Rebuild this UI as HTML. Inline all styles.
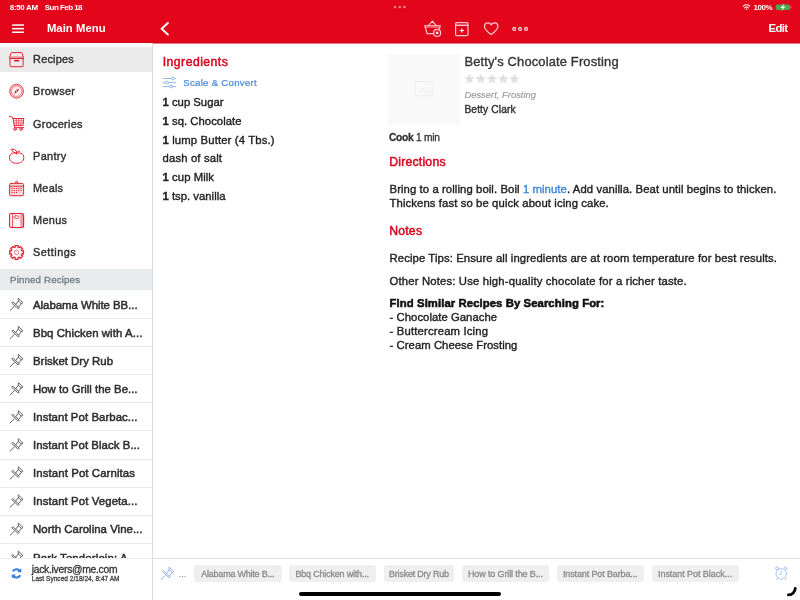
<!DOCTYPE html>
<html lang="en">
<head>
<meta charset="utf-8">
<title>Betty's Chocolate Frosting</title>
<style>
html,body{margin:0;padding:0;}
html{overflow:hidden;background:#fff;}
body{width:800px;height:600px;position:relative;overflow:hidden;background:#fff;font-family:"Liberation Sans",sans-serif;}
.t{position:absolute;white-space:pre;margin:0;padding:0;}
.t b{font-weight:700;}
.abs{position:absolute;}
#hdr{left:0;top:0;width:800px;height:43px;background:#e3061b;border-bottom:1px solid #ef7a84;box-shadow:inset 0 -1px 0 #d0081a;}
#side{left:0;top:43px;width:152px;height:557px;background:#fff;}
#sideline{left:152px;top:43px;width:1px;height:557px;background:#dcdcdc;}
#sel{left:0;top:47px;width:152px;height:25px;background:#ebebeb;}
#pinhdr{left:0;top:269px;width:152px;height:21px;background:#e8ecee;}
.sep{position:absolute;left:0;width:152px;height:1px;background:#e8e8e8;}
#foot{left:0;top:559px;width:152px;height:41px;background:#fff;z-index:5;}
#footline{left:0;top:558px;width:152px;height:1px;background:#ececec;z-index:5;}
#bar{left:153px;top:559px;width:647px;height:41px;background:#fff;z-index:5;}
#barline{left:153px;top:558px;width:647px;height:1px;background:#e2e2e2;z-index:5;}
.chip{position:absolute;top:565px;height:17px;background:#efefef;border-radius:3px;z-index:5;}
#ph{left:388.5px;top:54px;width:71px;height:71px;background:#f7f7f7;}
#home{left:299px;top:591.5px;width:202px;height:4.5px;border-radius:3px;background:#000;z-index:7;}
svg{position:absolute;overflow:visible;}
#app{position:absolute;left:0;top:0;width:800px;height:600px;overflow:hidden;will-change:transform;}
</style>
</head>
<body>
<div id="app">
<div id="hdr" class="abs"></div>
<div id="side" class="abs"></div>
<div id="sideline" class="abs"></div>
<div id="sel" class="abs"></div>
<div id="pinhdr" class="abs"></div>
<div class="sep" style="top:318.0px"></div>
<div class="sep" style="top:346.1px"></div>
<div class="sep" style="top:374.2px"></div>
<div class="sep" style="top:402.3px"></div>
<div class="sep" style="top:430.4px"></div>
<div class="sep" style="top:458.5px"></div>
<div class="sep" style="top:486.6px"></div>
<div class="sep" style="top:514.7px"></div>
<div class="sep" style="top:542.8px"></div>

<div id="foot" class="abs"></div>
<div id="footline" class="abs"></div>
<div id="bar" class="abs"></div>
<div id="barline" class="abs"></div>
<div class="chip" style="left:194.25px;width:87.5px"></div>
<div class="chip" style="left:288.75px;width:87.5px"></div>
<div class="chip" style="left:383.5px;width:70.5px"></div>
<div class="chip" style="left:461.5px;width:87.5px"></div>
<div class="chip" style="left:556.5px;width:87.5px"></div>
<div class="chip" style="left:651.5px;width:87.5px"></div>

<div id="home" class="abs"></div>
<svg width="800" height="600" viewBox="0 0 800 600" style="left:0;top:0;"><g fill="#f8eaec" stroke="#e3061b" stroke-width="1" stroke-linejoin="round" stroke-linecap="round" opacity="0.88"><path d="M9.7 57.2 L10.9 53.3 Q11.2 52.6 12 52.6 L21.1 52.6 Q21.9 52.6 22.2 53.3 L23.4 57.2 Z"/><rect x="9.5" y="57.1" width="14.1" height="1.9" fill="#fff" stroke-width="0.7"/><path d="M10 58.9 L10 65.6 Q10 66.7 11.1 66.7 L22 66.7 Q23.1 66.7 23.1 65.6 L23.1 58.9 Z"/></g><rect x="14.2" y="59.9" width="4.9" height="1.5" fill="#e3061b"/><circle cx="16.56" cy="91.2" r="6.9" fill="rgba(227,6,27,0.22)" stroke="#e3061b" stroke-width="0.9" opacity="0.85"/><circle cx="16.56" cy="91.2" r="5.2" fill="#fff" stroke="#e3061b" stroke-width="0.6" opacity="0.75"/><path d="M19 88.7 L17.4 92.1 L14.1 93.7 L15.7 90.3 Z" fill="#e3061b"/><circle cx="16.56" cy="91.2" r="0.6" fill="#fff"/><g fill="none" stroke="#e3061b" stroke-width="1" stroke-linejoin="round" stroke-linecap="round" opacity="0.88"><path d="M9.5 116.6 L11.2 116.6 Q12.5 116.6 12.9 118 L14.6 127.4 L23.6 127.4"/><path d="M13.1 118.5 L23.8 118.5 L23 125.4 L14.2 125.4" fill="rgba(227,6,27,0.07)"/><path d="M16.3 118.5 L16.5 125.4 M18.6 118.5 L18.6 125.4 M21 118.5 L20.8 125.4 M13.5 120.8 L23.5 120.8 M13.9 123.1 L23.2 123.1" stroke-width="0.6"/><circle cx="15" cy="129" r="1.3" fill="#fff"/><circle cx="21" cy="129" r="1.3" fill="#fff"/></g><g fill="none" stroke="#e3061b" stroke-width="1" stroke-linejoin="round" stroke-linecap="round" opacity="0.88"><path d="M16.6 153.6 C14.4 152.2 9.5 152.6 9.5 157.8 C9.5 161.2 12.6 163.3 16.6 163.3 C20.7 163.3 23.8 161.2 23.8 157.8 C23.8 152.6 18.8 152.2 16.6 153.6 Z"/><path d="M11.7 149.3 C13.6 148.6 16.4 149.8 17 152.7 C14.6 153.3 12.2 152 11.7 149.3 Z"/><path d="M16.8 152.9 C17.5 151.4 18.3 150.9 19.6 151.1"/></g><g fill="rgba(227,6,27,0.16)" stroke="#e3061b" stroke-width="1" stroke-linejoin="round" stroke-linecap="round" opacity="0.88"><rect x="9.6" y="183.4" width="14" height="12.3" rx="1.3"/><path d="M9.6 186.2 L23.6 186.2" /><circle cx="16.56" cy="182.3" r="1" fill="#fff"/></g><g fill="#e3061b" opacity="0.8"><rect x="11.40" y="187.80" width="1.2" height="1.2"/><rect x="13.70" y="187.80" width="1.2" height="1.2"/><rect x="15.96" y="187.80" width="1.2" height="1.2"/><rect x="18.20" y="187.80" width="1.2" height="1.2"/><rect x="20.50" y="187.80" width="1.2" height="1.2"/><rect x="11.40" y="189.90" width="1.2" height="1.2"/><rect x="13.70" y="189.90" width="1.2" height="1.2"/><rect x="15.96" y="189.90" width="1.2" height="1.2"/><rect x="18.20" y="189.90" width="1.2" height="1.2"/><rect x="20.50" y="189.90" width="1.2" height="1.2"/><rect x="11.40" y="192.00" width="1.2" height="1.2"/><rect x="13.70" y="192.00" width="1.2" height="1.2"/><rect x="15.96" y="192.00" width="1.2" height="1.2"/></g><g fill="rgba(227,6,27,0.16)" stroke="#e3061b" stroke-width="1" stroke-linejoin="round" stroke-linecap="round" opacity="0.88"><rect x="9.6" y="213.5" width="14" height="14" rx="1.4" stroke-width="1.15"/></g><rect x="10.6" y="214.3" width="1.5" height="12.4" fill="#fff" opacity="0.8"/><rect x="13.1" y="214.3" width="7" height="12.4" fill="#fff" opacity="0.85"/><g fill="none" stroke="#e3061b" stroke-width="1" stroke-linejoin="round" stroke-linecap="round" opacity="0.88"><path d="M12.6 213.5 L12.6 227.5" stroke-width="0.8"/><rect x="14.3" y="215.8" width="4.6" height="2.7" rx="1.1" stroke-width="0.8"/></g><rect x="20.3" y="214" width="3" height="13" fill="#e3061b" opacity="0.3"/><path d="M15.28 247.05 L14.90 245.50 L18.22 245.50 L17.84 247.05 L19.43 247.71 L20.27 246.35 L22.61 248.69 L21.25 249.53 L21.91 251.12 L23.46 250.74 L23.46 254.06 L21.91 253.68 L21.25 255.27 L22.61 256.11 L20.27 258.45 L19.43 257.09 L17.84 257.75 L18.22 259.30 L14.90 259.30 L15.28 257.75 L13.69 257.09 L12.85 258.45 L10.51 256.11 L11.87 255.27 L11.21 253.68 L9.66 254.06 L9.66 250.74 L11.21 251.12 L11.87 249.53 L10.51 248.69 L12.85 246.35 L13.69 247.71 Z" fill="none" stroke="#e3061b" stroke-width="1.25" stroke-linejoin="round" stroke-linecap="round" opacity="0.88"/><circle cx="16.56" cy="252.4" r="2.3" fill="none" stroke="#e3061b" stroke-width="0.8" opacity="0.6"/><g transform="translate(0.00,0.00)" fill="none" stroke="#5c5c5c" stroke-width="0.95" stroke-linejoin="round" stroke-linecap="round" opacity="1"><path d="M10.1 310.5 L14.3 306.5"/><path d="M12.0 303.2 L18.3 308.8 L19.3 307.7 L13.0 302.1 Z"/><path d="M15.6 304.4 L18.3 301.0 L21.3 303.6 L18.6 307.0"/><path d="M18.3 301.0 L18.3 298.2 L23.0 302.7 L21.3 303.6"/></g><g transform="translate(0.00,28.10)" fill="none" stroke="#5c5c5c" stroke-width="0.95" stroke-linejoin="round" stroke-linecap="round" opacity="1"><path d="M10.1 310.5 L14.3 306.5"/><path d="M12.0 303.2 L18.3 308.8 L19.3 307.7 L13.0 302.1 Z"/><path d="M15.6 304.4 L18.3 301.0 L21.3 303.6 L18.6 307.0"/><path d="M18.3 301.0 L18.3 298.2 L23.0 302.7 L21.3 303.6"/></g><g transform="translate(0.00,56.20)" fill="none" stroke="#5c5c5c" stroke-width="0.95" stroke-linejoin="round" stroke-linecap="round" opacity="1"><path d="M10.1 310.5 L14.3 306.5"/><path d="M12.0 303.2 L18.3 308.8 L19.3 307.7 L13.0 302.1 Z"/><path d="M15.6 304.4 L18.3 301.0 L21.3 303.6 L18.6 307.0"/><path d="M18.3 301.0 L18.3 298.2 L23.0 302.7 L21.3 303.6"/></g><g transform="translate(0.00,84.30)" fill="none" stroke="#5c5c5c" stroke-width="0.95" stroke-linejoin="round" stroke-linecap="round" opacity="1"><path d="M10.1 310.5 L14.3 306.5"/><path d="M12.0 303.2 L18.3 308.8 L19.3 307.7 L13.0 302.1 Z"/><path d="M15.6 304.4 L18.3 301.0 L21.3 303.6 L18.6 307.0"/><path d="M18.3 301.0 L18.3 298.2 L23.0 302.7 L21.3 303.6"/></g><g transform="translate(0.00,112.40)" fill="none" stroke="#5c5c5c" stroke-width="0.95" stroke-linejoin="round" stroke-linecap="round" opacity="1"><path d="M10.1 310.5 L14.3 306.5"/><path d="M12.0 303.2 L18.3 308.8 L19.3 307.7 L13.0 302.1 Z"/><path d="M15.6 304.4 L18.3 301.0 L21.3 303.6 L18.6 307.0"/><path d="M18.3 301.0 L18.3 298.2 L23.0 302.7 L21.3 303.6"/></g><g transform="translate(0.00,140.50)" fill="none" stroke="#5c5c5c" stroke-width="0.95" stroke-linejoin="round" stroke-linecap="round" opacity="1"><path d="M10.1 310.5 L14.3 306.5"/><path d="M12.0 303.2 L18.3 308.8 L19.3 307.7 L13.0 302.1 Z"/><path d="M15.6 304.4 L18.3 301.0 L21.3 303.6 L18.6 307.0"/><path d="M18.3 301.0 L18.3 298.2 L23.0 302.7 L21.3 303.6"/></g><g transform="translate(0.00,168.60)" fill="none" stroke="#5c5c5c" stroke-width="0.95" stroke-linejoin="round" stroke-linecap="round" opacity="1"><path d="M10.1 310.5 L14.3 306.5"/><path d="M12.0 303.2 L18.3 308.8 L19.3 307.7 L13.0 302.1 Z"/><path d="M15.6 304.4 L18.3 301.0 L21.3 303.6 L18.6 307.0"/><path d="M18.3 301.0 L18.3 298.2 L23.0 302.7 L21.3 303.6"/></g><g transform="translate(0.00,196.70)" fill="none" stroke="#5c5c5c" stroke-width="0.95" stroke-linejoin="round" stroke-linecap="round" opacity="1"><path d="M10.1 310.5 L14.3 306.5"/><path d="M12.0 303.2 L18.3 308.8 L19.3 307.7 L13.0 302.1 Z"/><path d="M15.6 304.4 L18.3 301.0 L21.3 303.6 L18.6 307.0"/><path d="M18.3 301.0 L18.3 298.2 L23.0 302.7 L21.3 303.6"/></g><g transform="translate(0.00,224.80)" fill="none" stroke="#5c5c5c" stroke-width="0.95" stroke-linejoin="round" stroke-linecap="round" opacity="1"><path d="M10.1 310.5 L14.3 306.5"/><path d="M12.0 303.2 L18.3 308.8 L19.3 307.7 L13.0 302.1 Z"/><path d="M15.6 304.4 L18.3 301.0 L21.3 303.6 L18.6 307.0"/><path d="M18.3 301.0 L18.3 298.2 L23.0 302.7 L21.3 303.6"/></g><g transform="translate(0.00,252.90)" fill="none" stroke="#5c5c5c" stroke-width="0.95" stroke-linejoin="round" stroke-linecap="round" opacity="1"><path d="M10.1 310.5 L14.3 306.5"/><path d="M12.0 303.2 L18.3 308.8 L19.3 307.7 L13.0 302.1 Z"/><path d="M15.6 304.4 L18.3 301.0 L21.3 303.6 L18.6 307.0"/><path d="M18.3 301.0 L18.3 298.2 L23.0 302.7 L21.3 303.6"/></g></svg>
<svg width="800" height="600" viewBox="0 0 800 600" style="left:0;top:0;z-index:6;"><g fill="#fff"><rect x="12.1" y="24.3" width="11.9" height="1.5"/><rect x="12.1" y="27.9" width="11.9" height="1.5"/><rect x="12.1" y="31.5" width="11.9" height="1.5"/></g><path d="M167.9 23 L161.6 28.75 L167.9 34.5" fill="none" stroke="#fff" stroke-width="2" stroke-linecap="round" stroke-linejoin="round"/><g fill="#fff" opacity="0.5"><circle cx="395" cy="7" r="1.25"/><circle cx="399.75" cy="7" r="1.25"/><circle cx="404.5" cy="7" r="1.25"/></g><g fill="none" stroke="#fff" stroke-linecap="round"><path d="M743.3 6.1 Q746.5 3.4 749.7 6.1" stroke-width="1.1"/><path d="M744.7 7.8 Q746.5 6.3 748.3 7.8" stroke-width="1.1"/></g><circle cx="746.5" cy="9.3" r="0.8" fill="#fff"/><rect x="775.8" y="4.5" width="14.2" height="5.4" rx="1.6" fill="#47a94d"/><rect x="790.5" y="6.1" width="0.9" height="2.2" rx="0.4" fill="#fff" opacity="0.45"/><path d="M784.3 3.4 L780.2 7.9 L782.6 7.9 L781.6 11 L785.7 6.4 L783.3 6.4 Z" fill="#fff" stroke="#47a94d" stroke-width="0.3"/><g fill="none" stroke="#fff" stroke-width="1.2" stroke-linejoin="round" stroke-linecap="round" opacity="0.78"><path d="M424.3 25.6 L440.7 25.6 M424.6 27 L440.4 27" stroke-width="0.9"/><path d="M425.4 27.2 L427 33.6 L433.6 33.6"/><path d="M439.6 27.2 L439.2 28.8"/><path d="M428.6 25.4 L432.4 21.2 L436.1 25.4"/><circle cx="437.1" cy="32.9" r="3.5"/></g><circle cx="437.1" cy="32.9" r="1.4" fill="#fff" opacity="0.85"/><g fill="none" stroke="#fff" stroke-width="1.2" stroke-linejoin="round" stroke-linecap="round" opacity="0.78"><rect x="455.6" y="22.5" width="12.4" height="13.1" rx="1.2"/><path d="M455.6 25.3 L468 25.3"/></g><path d="M461.8 28.4 L461.8 32.6 M459.7 30.5 L463.9 30.5" stroke="#fff" stroke-width="1.2" fill="none"/><rect x="455.6" y="22.5" width="12.4" height="2.8" fill="#fff" opacity="0.18"/><path fill="none" stroke="#fff" stroke-width="1.2" stroke-linejoin="round" stroke-linecap="round" opacity="0.78" d="M491.2 34.6 C487.5 31.8 484.5 29.4 484.5 26.4 C484.5 24.3 486.1 22.9 487.9 22.9 C489.2 22.9 490.5 23.6 491.2 24.9 C491.9 23.6 493.2 22.9 494.5 22.9 C496.3 22.9 497.9 24.3 497.9 26.4 C497.9 29.4 494.9 31.8 491.2 34.6 Z"/><g fill="rgba(255,255,255,0.35)" stroke="#fff" stroke-width="1.1" opacity="0.8"><circle cx="514.2" cy="28.9" r="1.5"/><circle cx="520.1" cy="28.9" r="1.5"/><circle cx="526.1" cy="28.9" r="1.5"/></g><g fill="none" stroke="#86b3ea" stroke-width="0.9" stroke-linecap="round"><path d="M163.2 78.5 L175.8 78.5 M163.2 82.6 L175.8 82.6 M163.2 86.6 L175.8 86.6"/><rect x="171.5" y="77.3" width="3" height="2.4" rx="1.2" fill="#fff"/><rect x="165.6" y="81.4" width="3" height="2.4" rx="1.2" fill="#fff"/><rect x="169.6" y="85.4" width="3" height="2.4" rx="1.2" fill="#fff"/></g><g fill="#e0e0e0"><polygon points="469.40,73.70 470.87,77.08 474.54,77.43 471.78,79.87 472.57,83.47 469.40,81.60 466.23,83.47 467.02,79.87 464.26,77.43 467.93,77.08"/><polygon points="480.70,73.70 482.17,77.08 485.84,77.43 483.08,79.87 483.87,83.47 480.70,81.60 477.53,83.47 478.32,79.87 475.56,77.43 479.23,77.08"/><polygon points="491.90,73.70 493.37,77.08 497.04,77.43 494.28,79.87 495.07,83.47 491.90,81.60 488.73,83.47 489.52,79.87 486.76,77.43 490.43,77.08"/><polygon points="503.30,73.70 504.77,77.08 508.44,77.43 505.68,79.87 506.47,83.47 503.30,81.60 500.13,83.47 500.92,79.87 498.16,77.43 501.83,77.08"/><polygon points="514.40,73.70 515.87,77.08 519.54,77.43 516.78,79.87 517.57,83.47 514.40,81.60 511.23,83.47 512.02,79.87 509.26,77.43 512.93,77.08"/></g><rect x="388.4" y="54" width="71.2" height="71" fill="#f9f9f9"/><g fill="none" stroke="#eeeeee" stroke-width="1"><rect x="415" y="81.5" width="18" height="14.2" rx="0.8"/><path d="M419.5 92 L422.5 88.8 L424.5 90.8 L427.5 87.8 L431.5 92 Z"/></g><g transform="translate(150.90,269.00)" fill="none" stroke="#8aa9e6" stroke-width="0.9" stroke-linejoin="round" stroke-linecap="round" opacity="1"><path d="M10.1 310.5 L14.3 306.5"/><path d="M12.0 303.2 L18.3 308.8 L19.3 307.7 L13.0 302.1 Z"/><path d="M15.6 304.4 L18.3 301.0 L21.3 303.6 L18.6 307.0"/><path d="M18.3 301.0 L18.3 298.2 L23.0 302.7 L21.3 303.6"/></g><g fill="none" stroke="#9ec2ee" stroke-width="0.9" stroke-linecap="round"><circle cx="781.2" cy="573.9" r="5.2"/><path d="M781.2 570.8 L781.2 574.2 L779.3 574.2"/><circle cx="777" cy="568.3" r="1.5"/><circle cx="785.4" cy="568.3" r="1.5"/><path d="M777.7 578.2 L776.6 579.6 M784.7 578.2 L785.8 579.6"/></g><g fill="none" stroke="#2f7ddb" stroke-width="2.1"><path d="M12.9 571.5 A4.1 4.1 0 0 1 19.6 570.6"/><path d="M20.2 575.3 A4.1 4.1 0 0 1 13.5 576.2"/></g><g fill="#2f7ddb"><path d="M21.3 568.2 L21.3 572.3 L17.2 572.3 Z"/><path d="M11.8 578.6 L11.8 574.5 L15.9 574.5 Z"/></g><path d="M788.4 594.9 A6.9 6.9 0 0 0 795.3 588.3" fill="none" stroke="#000" stroke-width="2.8" stroke-linecap="round"/></svg>
<div class="t" style="left:9.80px;top:3.00px;font-size:8px;line-height:10px;font-weight:700;color:#ffffff;letter-spacing:-0.348px;">8:50 AM</div>
<div class="t" style="left:44.80px;top:3.00px;font-size:8px;line-height:10px;font-weight:700;color:#ffffff;letter-spacing:-0.554px;">Sun Feb 18</div>
<div class="t" style="left:753.50px;top:3.00px;font-size:8px;line-height:10px;font-weight:700;color:#ffffff;letter-spacing:-0.490px;">100%</div>
<div class="t" style="left:46.90px;top:21.00px;font-size:11.3px;line-height:15px;font-weight:700;color:#ffffff;letter-spacing:0.041px;">Main Menu</div>
<div class="t" style="left:768.50px;top:21.00px;font-size:11.3px;line-height:15px;font-weight:700;color:#ffffff;letter-spacing:-0.615px;">Edit</div>
<div class="t" style="left:33.10px;top:52.00px;font-size:10.9px;line-height:14px;font-weight:400;color:#333333;letter-spacing:0.215px;-webkit-text-stroke:0.42px #333333;">Recipes</div>
<div class="t" style="left:33.10px;top:84.00px;font-size:10.9px;line-height:14px;font-weight:400;color:#333333;letter-spacing:0.324px;-webkit-text-stroke:0.42px #333333;">Browser</div>
<div class="t" style="left:33.10px;top:117.00px;font-size:10.9px;line-height:14px;font-weight:400;color:#333333;letter-spacing:0.273px;-webkit-text-stroke:0.42px #333333;">Groceries</div>
<div class="t" style="left:33.10px;top:149.00px;font-size:10.9px;line-height:14px;font-weight:400;color:#333333;letter-spacing:0.333px;-webkit-text-stroke:0.42px #333333;">Pantry</div>
<div class="t" style="left:33.10px;top:181.00px;font-size:10.9px;line-height:14px;font-weight:400;color:#333333;letter-spacing:0.209px;-webkit-text-stroke:0.42px #333333;">Meals</div>
<div class="t" style="left:33.10px;top:213.00px;font-size:10.9px;line-height:14px;font-weight:400;color:#333333;letter-spacing:0.299px;-webkit-text-stroke:0.42px #333333;">Menus</div>
<div class="t" style="left:33.10px;top:245.00px;font-size:10.9px;line-height:14px;font-weight:400;color:#333333;letter-spacing:0.449px;-webkit-text-stroke:0.42px #333333;">Settings</div>
<div class="t" style="left:10.00px;top:273.00px;font-size:9.7px;line-height:13px;font-weight:400;color:#707b83;letter-spacing:0.165px;-webkit-text-stroke:0.3px #707b83;">Pinned Recipes</div>
<div class="t" style="left:33.00px;top:298.00px;font-size:11.4px;line-height:15px;font-weight:400;color:#2e2e2e;letter-spacing:-0.027px;-webkit-text-stroke:0.5px #2e2e2e;">Alabama White BB...</div>
<div class="t" style="left:33.00px;top:326.00px;font-size:11.4px;line-height:15px;font-weight:400;color:#2e2e2e;letter-spacing:0.088px;-webkit-text-stroke:0.5px #2e2e2e;">Bbq Chicken with A...</div>
<div class="t" style="left:33.00px;top:354.00px;font-size:11.4px;line-height:15px;font-weight:400;color:#2e2e2e;letter-spacing:0.017px;-webkit-text-stroke:0.5px #2e2e2e;">Brisket Dry Rub</div>
<div class="t" style="left:33.00px;top:382.00px;font-size:11.4px;line-height:15px;font-weight:400;color:#2e2e2e;letter-spacing:0.002px;-webkit-text-stroke:0.5px #2e2e2e;">How to Grill the Be...</div>
<div class="t" style="left:33.00px;top:410.00px;font-size:11.4px;line-height:15px;font-weight:400;color:#2e2e2e;letter-spacing:0.064px;-webkit-text-stroke:0.5px #2e2e2e;">Instant Pot Barbac...</div>
<div class="t" style="left:33.00px;top:438.00px;font-size:11.4px;line-height:15px;font-weight:400;color:#2e2e2e;letter-spacing:0.060px;-webkit-text-stroke:0.5px #2e2e2e;">Instant Pot Black B...</div>
<div class="t" style="left:33.00px;top:466.00px;font-size:11.4px;line-height:15px;font-weight:400;color:#2e2e2e;letter-spacing:0.103px;-webkit-text-stroke:0.5px #2e2e2e;">Instant Pot Carnitas</div>
<div class="t" style="left:33.00px;top:494.00px;font-size:11.4px;line-height:15px;font-weight:400;color:#2e2e2e;letter-spacing:0.095px;-webkit-text-stroke:0.5px #2e2e2e;">Instant Pot Vegeta...</div>
<div class="t" style="left:33.00px;top:522.00px;font-size:11.4px;line-height:15px;font-weight:400;color:#2e2e2e;letter-spacing:0.038px;-webkit-text-stroke:0.5px #2e2e2e;">North Carolina Vine...</div>
<div class="t" style="left:33.00px;top:551.00px;font-size:11.4px;line-height:15px;font-weight:400;color:#2e2e2e;letter-spacing:0.138px;-webkit-text-stroke:0.5px #2e2e2e;">Pork Tenderloin: A...</div>
<div class="t" style="left:162.75px;top:54.00px;font-size:12.2px;line-height:16px;font-weight:400;color:#d9081f;letter-spacing:0.474px;-webkit-text-stroke:0.5px #d9081f;">Ingredients</div>
<div class="t" style="left:183.20px;top:77.00px;font-size:9.6px;line-height:12px;font-weight:400;color:#4489da;letter-spacing:0.305px;-webkit-text-stroke:0.2px #4489da;">Scale &amp; Convert</div>
<div class="t" style="left:162.50px;top:95.00px;font-size:11.3px;line-height:15px;font-weight:400;color:#222222;letter-spacing:0.006px;-webkit-text-stroke:0.38px #222222;"><b>1</b> cup Sugar</div>
<div class="t" style="left:162.50px;top:114.00px;font-size:11.3px;line-height:15px;font-weight:400;color:#222222;letter-spacing:0.035px;-webkit-text-stroke:0.38px #222222;"><b>1</b> sq. Chocolate</div>
<div class="t" style="left:162.50px;top:133.00px;font-size:11.3px;line-height:15px;font-weight:400;color:#222222;letter-spacing:0.140px;-webkit-text-stroke:0.38px #222222;"><b>1</b> lump Butter (4 Tbs.)</div>
<div class="t" style="left:162.50px;top:151.00px;font-size:11.3px;line-height:15px;font-weight:400;color:#222222;letter-spacing:0.156px;-webkit-text-stroke:0.38px #222222;">dash of salt</div>
<div class="t" style="left:162.50px;top:170.00px;font-size:11.3px;line-height:15px;font-weight:400;color:#222222;letter-spacing:0.069px;-webkit-text-stroke:0.38px #222222;"><b>1</b> cup Milk</div>
<div class="t" style="left:162.50px;top:189.00px;font-size:11.3px;line-height:15px;font-weight:400;color:#222222;letter-spacing:0.014px;-webkit-text-stroke:0.38px #222222;"><b>1</b> tsp. vanilla</div>
<div class="t" style="left:464.40px;top:53.00px;font-size:12.9px;line-height:17px;font-weight:400;color:#333;letter-spacing:0.166px;-webkit-text-stroke:0.35px #333;">Betty's Chocolate Frosting</div>
<div class="t" style="left:464.40px;top:89.00px;font-size:9.4px;line-height:12px;font-weight:400;color:#999;letter-spacing:0.014px;font-style:italic;-webkit-text-stroke:0.15px #999;">Dessert, Frosting</div>
<div class="t" style="left:464.40px;top:103.00px;font-size:10.2px;line-height:13px;font-weight:400;color:#333;letter-spacing:0.137px;-webkit-text-stroke:0.4px #333;">Betty Clark</div>
<div class="t" style="left:389.00px;top:131.00px;font-size:10.2px;line-height:13px;font-weight:400;color:#333;letter-spacing:-0.247px;-webkit-text-stroke:0.3px #333;"><b>Cook</b> 1 min</div>
<div class="t" style="left:389.20px;top:154.00px;font-size:12.2px;line-height:16px;font-weight:400;color:#d9081f;letter-spacing:0.235px;-webkit-text-stroke:0.5px #d9081f;">Directions</div>
<div class="t" style="left:389.50px;top:182.00px;font-size:11.3px;line-height:15px;font-weight:400;color:#222222;letter-spacing:0.092px;-webkit-text-stroke:0.38px #222222;">Bring to a rolling boil. Boil <span style="color:#3d86d8;-webkit-text-stroke-color:#3d86d8">1 minute</span>. Add vanilla. Beat until begins to thicken.</div>
<div class="t" style="left:389.50px;top:196.00px;font-size:11.3px;line-height:15px;font-weight:400;color:#222222;letter-spacing:0.107px;-webkit-text-stroke:0.38px #222222;">Thickens fast so be quick about icing cake.</div>
<div class="t" style="left:389.20px;top:223.00px;font-size:12.2px;line-height:16px;font-weight:400;color:#d9081f;letter-spacing:0.239px;-webkit-text-stroke:0.5px #d9081f;">Notes</div>
<div class="t" style="left:389.50px;top:251.00px;font-size:11.3px;line-height:15px;font-weight:400;color:#222222;letter-spacing:0.108px;-webkit-text-stroke:0.38px #222222;">Recipe Tips: Ensure all ingredients are at room temperature for best results.</div>
<div class="t" style="left:389.50px;top:274.00px;font-size:11.3px;line-height:15px;font-weight:400;color:#222222;letter-spacing:0.166px;-webkit-text-stroke:0.38px #222222;">Other Notes: Use high-quality chocolate for a richer taste.</div>
<div class="t" style="left:389.60px;top:296.00px;font-size:11.3px;line-height:15px;font-weight:700;color:#111;letter-spacing:0.087px;-webkit-text-stroke:0.55px #111;">Find Similar Recipes By Searching For:</div>
<div class="t" style="left:389.60px;top:310.00px;font-size:11.3px;line-height:15px;font-weight:400;color:#222222;letter-spacing:0.035px;-webkit-text-stroke:0.38px #222222;">- Chocolate Ganache</div>
<div class="t" style="left:389.60px;top:324.00px;font-size:11.3px;line-height:15px;font-weight:400;color:#222222;letter-spacing:0.165px;-webkit-text-stroke:0.38px #222222;">- Buttercream Icing</div>
<div class="t" style="left:389.60px;top:338.00px;font-size:11.3px;line-height:15px;font-weight:400;color:#222222;letter-spacing:0.044px;-webkit-text-stroke:0.38px #222222;">- Cream Cheese Frosting</div>
<div class="t" style="left:201.25px;top:568.00px;font-size:9px;line-height:12px;font-weight:400;color:#8a8a8a;letter-spacing:-0.223px;-webkit-text-stroke:0.3px #8a8a8a;z-index:6;">Alabama White B...</div>
<div class="t" style="left:295.50px;top:568.00px;font-size:9px;line-height:12px;font-weight:400;color:#8a8a8a;letter-spacing:-0.197px;-webkit-text-stroke:0.3px #8a8a8a;z-index:6;">Bbq Chicken with...</div>
<div class="t" style="left:389.00px;top:568.00px;font-size:9px;line-height:12px;font-weight:400;color:#8a8a8a;letter-spacing:-0.215px;-webkit-text-stroke:0.3px #8a8a8a;z-index:6;">Brisket Dry Rub</div>
<div class="t" style="left:468.00px;top:568.00px;font-size:9px;line-height:12px;font-weight:400;color:#8a8a8a;letter-spacing:-0.127px;-webkit-text-stroke:0.3px #8a8a8a;z-index:6;">How to Grill the B...</div>
<div class="t" style="left:563.00px;top:568.00px;font-size:9px;line-height:12px;font-weight:400;color:#8a8a8a;letter-spacing:-0.134px;-webkit-text-stroke:0.3px #8a8a8a;z-index:6;">Instant Pot Barba...</div>
<div class="t" style="left:658.00px;top:568.00px;font-size:9px;line-height:12px;font-weight:400;color:#8a8a8a;letter-spacing:-0.055px;-webkit-text-stroke:0.3px #8a8a8a;z-index:6;">Instant Pot Black...</div>
<div class="t" style="left:178.75px;top:568.00px;font-size:9px;line-height:12px;font-weight:400;color:#777;letter-spacing:-0.008px;z-index:6;">...</div>
<div class="t" style="left:31.75px;top:563.00px;font-size:10.3px;line-height:13px;font-weight:400;color:#333;letter-spacing:-0.265px;-webkit-text-stroke:0.3px #333;z-index:6;">jack.ivers@me.com</div>
<div class="t" style="left:31.75px;top:575.00px;font-size:6.5px;line-height:8px;font-weight:400;color:#444;letter-spacing:0.038px;-webkit-text-stroke:0.3px #444;z-index:6;">Last Synced 2/18/24, 8:47 AM</div>
</div>
</body>
</html>
